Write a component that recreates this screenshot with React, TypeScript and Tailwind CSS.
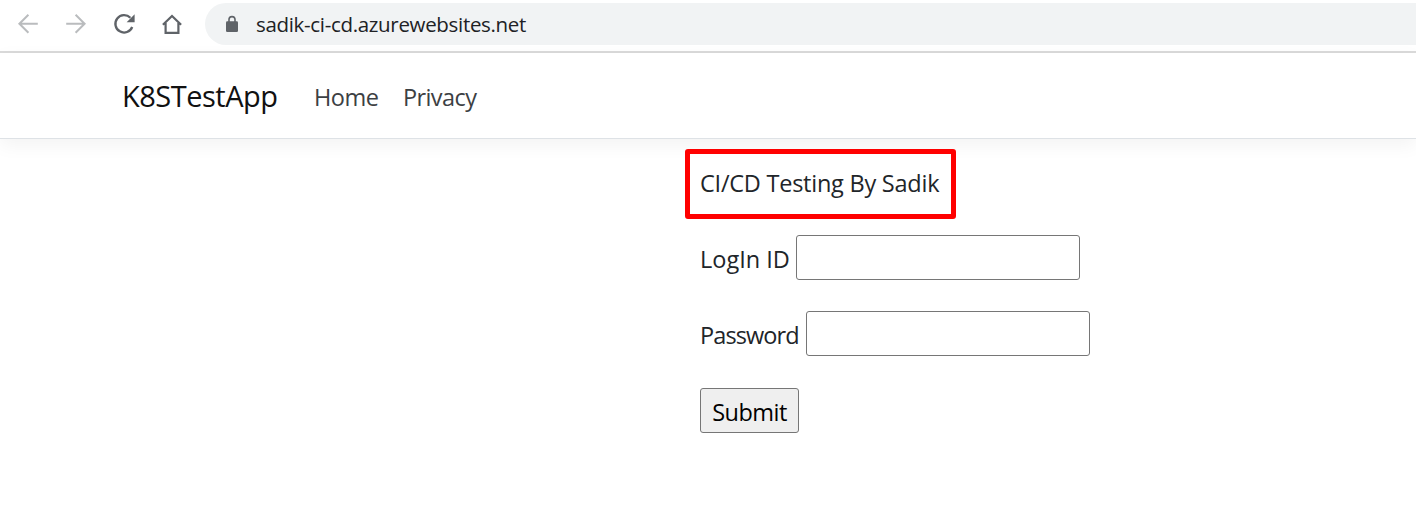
import React from 'react';

function BackIcon() {
  return (
    <svg width="24" height="24" viewBox="0 0 24 24" fill="none" stroke="#babcbe" strokeWidth="2">
      <path d="M21.8 11.7H4M12.4 2.7L3.4 11.7l9 9" />
    </svg>
  );
}

function ForwardIcon() {
  return (
    <svg width="24" height="24" viewBox="0 0 24 24" fill="none" stroke="#babcbe" strokeWidth="2">
      <path d="M2.2 11.7h18M11.6 2.7l9 9-9 9" />
    </svg>
  );
}

function ReloadIcon() {
  return (
    <svg width="24" height="24" viewBox="0 0 24 24" fill="none">
      <path d="M18.4 5.8A8.7 8.7 0 1 0 20.2 15" stroke="#5f6368" strokeWidth="2.3" />
      <path d="M22.6 2.2v8h-8z" fill="#5f6368" />
    </svg>
  );
}

function HomeIcon() {
  return (
    <svg width="24" height="24" viewBox="0 0 24 24" fill="none" stroke="#5f6368" strokeWidth="2.2">
      <path d="M2.9 12.8L12 4l9.1 8.8M5.6 11v9.9h12.8V11" />
    </svg>
  );
}

function LockIcon() {
  return (
    <svg width="14" height="18" viewBox="0 0 14 18" fill="none">
      <rect x="1" y="6.2" width="12" height="10.8" rx="1.3" fill="#5f6368" />
      <path d="M4 7V4.6a3 3 0 0 1 6 0V7" stroke="#5f6368" strokeWidth="1.6" />
    </svg>
  );
}

export default function App() {
  return (
    <div className="h-[530px] w-full overflow-hidden bg-white font-['Open_Sans','Noto_Sans',sans-serif] text-[23.5px] leading-9 text-[#212529]">
      <div className="flex h-[53px] items-start border-b-2 border-[#dadada] pt-[3px]">
        <div className="flex h-[42px] w-[205px] shrink-0 items-center gap-6 pl-4">
          <BackIcon />
          <ForwardIcon />
          <ReloadIcon />
          <HomeIcon />
        </div>
        <div className="flex h-[42px] flex-1 items-center rounded-l-full bg-[#f1f3f4] pl-5">
          <LockIcon />
          <span className="ml-[17px] text-[20.5px] tracking-[-0.32px] whitespace-nowrap text-[#202124]">sadik-ci-cd.azurewebsites.net</span>
        </div>
      </div>
      <header className="relative flex h-[86px] items-center border-b border-[#dee2e6] bg-white pl-[122px] shadow-[0_6px_18px_rgba(0,0,0,0.05)]">
        <a className="w-[192px] pt-px text-[29px] tracking-[-0.5px] text-[#111]">K8STestApp</a>
        <a className="w-[89px] pt-[2px] tracking-[-0.5px] text-[#3c4043]">Home</a>
        <a className="pt-[2px] tracking-[-0.6px] text-[#3c4043]">Privacy</a>
      </header>
      <main className="relative flex flex-col items-start pt-[10px] pl-[685px]">
        <div className="flex h-[70px] w-[271px] items-center rounded-[3px] border-[5px] border-[#ff0000] pb-[3px] pl-[10px] whitespace-nowrap">
          <span className="tracking-[-0.24px]">CI/CD Testing By Sadik</span>
        </div>
        <div className="mt-4 flex items-center pl-[15px]">
          <label htmlFor="login" className="w-24 pt-[2px] whitespace-nowrap">LogIn ID</label>
          <input id="login" className="h-[45px] w-[284px] rounded-[3px] border border-[#767676] bg-white" />
        </div>
        <div className="mt-[31px] flex items-center pl-[15px]">
          <label htmlFor="password" className="w-[106px] pt-[3px] tracking-[-0.9px] whitespace-nowrap">Password</label>
          <input id="password" type="password" className="h-[45px] w-[284px] rounded-[3px] border border-[#767676] bg-white" />
        </div>
        <button className="mt-8 ml-[15px] flex h-[45px] w-[99px] items-center justify-center rounded-[3px] border border-[#767676] bg-[#efefef] pt-[2px] tracking-[-0.5px] text-black">
          Submit
        </button>
      </main>
    </div>
  );
}
